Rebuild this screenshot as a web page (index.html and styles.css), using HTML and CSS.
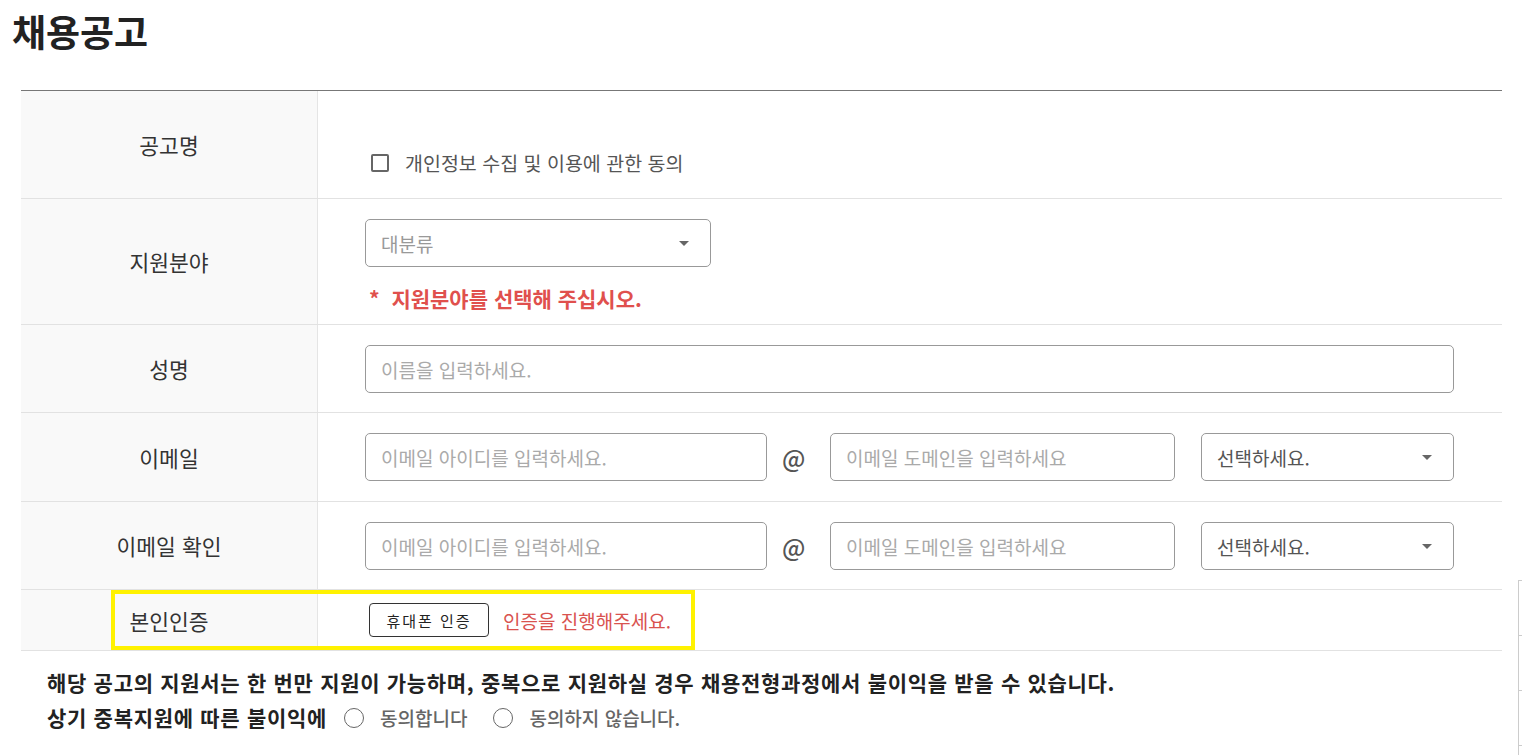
FILE: index.html
```html
<!DOCTYPE html>
<html lang="ko">

<head>
    <meta charset="UTF-8">
    <title>채용공고</title>
    <link rel="stylesheet" href="styles.css">
</head>

<body>
    <div class="page">
        <h1 class="page-title">채용공고</h1>

        <div class="form-table">
            <div class="row row-title">
                <div class="label">공고명</div>
                <div class="value">
                    <label class="check">
                        <input type="checkbox">
                        <span>개인정보 수집 및 이용에 관한 동의</span>
                    </label>
                </div>
            </div>

            <div class="row row-field">
                <div class="label">지원분야</div>
                <div class="value column">
                    <div class="select-wrap w-category">
                        <select class="placeholder">
                            <option>대분류</option>
                        </select>
                    </div>
                    <p class="error">*&nbsp; 지원분야를 선택해 주십시오.</p>
                </div>
            </div>

            <div class="row">
                <div class="label">성명</div>
                <div class="value">
                    <input class="text full" type="text" placeholder="이름을 입력하세요.">
                </div>
            </div>

            <div class="row row-mail">
                <div class="label">이메일</div>
                <div class="value">
                    <input class="text w-id" type="text" placeholder="이메일 아이디를 입력하세요.">
                    <span class="at">@</span>
                    <input class="text w-domain" type="text" placeholder="이메일 도메인을 입력하세요">
                    <div class="select-wrap w-pick">
                        <select>
                            <option>선택하세요.</option>
                        </select>
                    </div>
                </div>
            </div>

            <div class="row">
                <div class="label">이메일 확인</div>
                <div class="value">
                    <input class="text w-id" type="text" placeholder="이메일 아이디를 입력하세요.">
                    <span class="at">@</span>
                    <input class="text w-domain" type="text" placeholder="이메일 도메인을 입력하세요">
                    <div class="select-wrap w-pick">
                        <select>
                            <option>선택하세요.</option>
                        </select>
                    </div>
                </div>
            </div>

            <div class="row row-auth">
                <div class="label">본인인증</div>
                <div class="value">
                    <button class="btn-auth" type="button">휴대폰 인증</button>
                    <span class="auth-msg">인증을 진행해주세요.</span>
                </div>
                <div class="highlight"></div>
            </div>
        </div>

        <div class="notice">
            <p>해당 공고의 지원서는 한 번만 지원이 가능하며, 중복으로 지원하실 경우 채용전형과정에서 불이익을 받을 수 있습니다.</p>
            <p class="agree">
                상기 중복지원에 따른 불이익에
                <label class="radio"><input type="radio" name="dup"><span>동의합니다</span></label>
                <label class="radio"><input type="radio" name="dup"><span>동의하지 않습니다.</span></label>
            </p>
        </div>
    </div>

    <!-- 오른쪽 끝에 잘려 보이는 표 -->
    <div class="edge-table">
        <div></div>
        <div></div>
        <div></div>
        <div></div>
    </div>
</body>

</html>
```

FILE: styles.css
```css
body {
    margin: 0;
    font-family: "Noto Sans CJK KR", "Noto Sans", sans-serif;
    color: #222;
    background-color: #fff;
}

.page {
    padding: 0 20px 0 12px;
}

.page-title {
    margin: 0;
    padding-top: 5px;
    font-size: 37px;
    line-height: 52px;
    font-weight: 700;
    color: #222;
}

.form-table {
    margin-left: 9px;
    margin-top: 33px;
    border-top: 1px solid #777;
}

.row {
    position: relative;
    display: flex;
    border-bottom: 1px solid #e2e2e2;
}

.label {
    width: 296px;
    flex-shrink: 0;
    display: flex;
    align-items: center;
    justify-content: center;
    background-color: #f9f9f9;
    border-right: 1px solid #e5e5e5;
    font-size: 21.5px;
    color: #333;
}

.value {
    flex: 1;
    display: flex;
    align-items: center;
    padding: 20px 48px 19px 47px;
}

.value.column {
    flex-direction: column;
    align-items: flex-start;
}

/* 공고명 */
.row-title .value {
    height: 107px;
    box-sizing: border-box;
    align-items: flex-end;
    padding-bottom: 21px;
    padding-left: 53px;
}

.check {
    display: flex;
    align-items: center;
    gap: 16px;
    font-size: 19.5px;
    color: #555;
}

.check input {
    appearance: none;
    margin: 0;
    width: 18px;
    height: 18px;
    border: 2px solid #666;
    border-radius: 2px;
}

/* 입력 */
.text,
.select-wrap select {
    height: 48px;
    box-sizing: border-box;
    border: 1px solid #999;
    border-radius: 5px;
    padding: 0 15px;
    font-family: inherit;
    font-size: 19px;
    color: #555;
    background-color: #fff;
}

.text::placeholder {
    color: #aaa;
}

.full {
    width: 100%;
}

.w-id {
    width: 402px;
}

.w-domain {
    width: 345px;
}

.at {
    width: 20px;
    margin: 0 28px 0 15px;
    text-align: center;
    font-size: 24px;
    font-weight: 500;
    color: #555;
}

.select-wrap {
    position: relative;
}

.select-wrap select {
    appearance: none;
    width: 100%;
}

.select-wrap select.placeholder {
    color: #999;
}

.select-wrap::after {
    content: "";
    position: absolute;
    right: 22px;
    top: 22px;
    border-left: 5px solid transparent;
    border-right: 5px solid transparent;
    border-top: 5px solid #666;
}

.w-category {
    width: 346px;
}

.w-pick {
    width: 253px;
    margin-left: 26px;
}

.error {
    margin: 17px 0 0 4px;
    font-size: 21px;
    line-height: 28px;
    font-weight: 700;
    color: #e0504d;
}

.row-field .value {
    padding-bottom: 12px;
}

.row-mail .value {
    padding-bottom: 20px;
}

/* 본인인증 */
.row-auth .value {
    padding: 13px 48px 13px 51px;
}

.btn-auth {
    width: 120px;
    height: 34px;
    border: 1px solid #333;
    border-radius: 4px;
    background-color: #fff;
    font-family: inherit;
    font-size: 15px;
    letter-spacing: 2px;
    color: #222;
}

.auth-msg {
    margin-left: 14px;
    font-size: 19px;
    color: #d9534f;
}

.highlight {
    position: absolute;
    left: 90px;
    top: 0;
    width: 584px;
    height: 60px;
    box-sizing: border-box;
    border: 4px solid #fff200;
    pointer-events: none;
}

/* 안내 */
.notice {
    padding: 14px 0 0 26px;
    margin-left: 9px;
}

.notice p {
    margin: 0;
    font-size: 21px;
    line-height: 35px;
    letter-spacing: 0.7px;
    font-weight: 700;
    color: #222;
}

.agree {
    display: flex;
    align-items: center;
}

.radio {
    display: flex;
    align-items: center;
    gap: 16px;
    margin-left: 17px;
    font-size: 19px;
    letter-spacing: 0;
    font-weight: 500;
    color: #666;
}

.radio + .radio {
    margin-left: 26px;
}

.radio input {
    appearance: none;
    margin: 0;
    width: 20px;
    height: 20px;
    border: 1.5px solid #666;
    border-radius: 50%;
}

.edge-table {
    position: absolute;
    left: 1518px;
    top: 580px;
    width: 4px;
    height: 175px;
    overflow: hidden;
    border-left: 1px solid #ccc;
}

.edge-table div {
    height: 54px;
    border-top: 1px solid #ccc;
}
```
